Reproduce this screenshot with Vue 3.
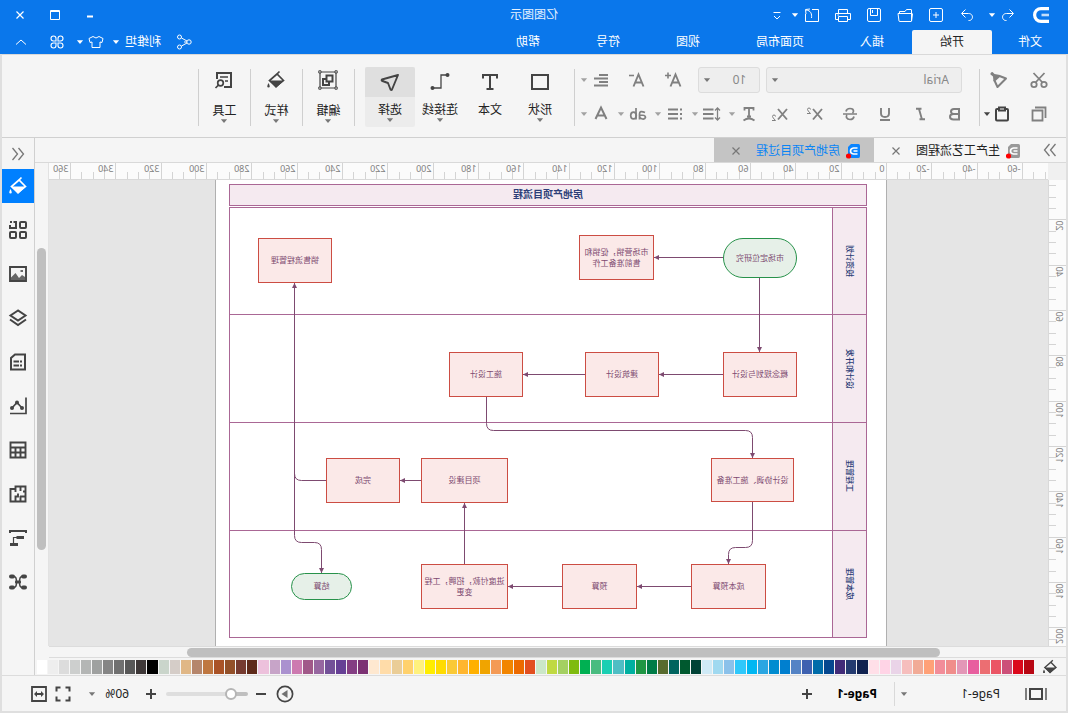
<script setup>
import { ref } from 'vue'

const font = ref('Arial')
const fontSize = ref('10')
const page = ref('Page-1')
const zoom = ref(16)

const menus = ['文件', '开始', '插入', '页面布局', '视图', '符号', '帮助']
const quick = [
  ['new', '新建'], ['open', '打开'], ['save', '保存'], ['print', '打印'], ['export', '导出'],
]
const formats = [
  ['bold', '加粗'], ['italic', '斜体'], ['underline', '下划线'],
  ['strike', '删除线'], ['sup', '上标'], ['sub', '下标'],
]
const textTools = [
  ['tcurve', '文字弯曲'], ['spacing', '行距'], ['bullets', '项目符号'], ['ab', '高亮'], ['acolor', '字体颜色'],
]
const tools = [
  { icon: 'shape', label: '形状', caret: true },
  { icon: 'text', label: '文本', caret: false },
  { icon: 'connector', label: '连接线', caret: true },
  { icon: 'pointer', label: '选择', caret: true, active: true },
]
const groups = [
  { icon: 'edit', label: '编辑' },
  { icon: 'bucket', label: '样式' },
  { icon: 'find', label: '工具' },
]
const side = [
  ['bucket', '填充'], ['grid', '符号库'], ['image', '图片'], ['layers', '图层'], ['doc', '注释'],
  ['chart', '图表'], ['table', '表格'], ['plan', '平面图'], ['gantt', '甘特图'], ['mind', '思维导图'],
]

const step = 45.33
const hTicks = []
for (let i = -14; i <= 74; i++) {
  const x = Math.round(161 + (i * step) / 4) + 0.5
  if (x > 0) hTicks.push({ x, major: i % 4 === 0, label: i * 5 })
}
const vTicks = []
for (let i = 1; i <= 41; i++) {
  const y = Math.round(-6 + (i * step) / 4) + 0.5
  if (y > 0) vTicks.push({ y, major: i % 4 === 0, label: i * 5 })
}

const lanes = [
  { y: 261, label: '投资计划' },
  { y: 369, label: '设计和开发' },
  { y: 476, label: '工程管理' },
  { y: 584, label: '成本管理' },
]
const laneLines = [314.5, 422.5, 530.5]
const nodes = [
  { x: 271.5, y: 238.5, w: 73, h: 39, end: true, lines: ['市场定位研究'] },
  { x: 414.5, y: 235.5, w: 74, h: 44, lines: ['市场营销，促销和', '售前准备工作'] },
  { x: 736.5, y: 238.5, w: 73, h: 44, lines: ['销售流程管理'] },
  { x: 271.5, y: 352.5, w: 73, h: 44, lines: ['概念规划与设计'] },
  { x: 409.5, y: 352.5, w: 73, h: 44, lines: ['建筑设计'] },
  { x: 545.5, y: 352.5, w: 73, h: 44, lines: ['施工设计'] },
  { x: 274.5, y: 458.5, w: 82, h: 43, lines: ['设计协调、施工准备'] },
  { x: 560.5, y: 458.5, w: 86, h: 44, lines: ['项目建设'] },
  { x: 668.5, y: 458.5, w: 73, h: 44, lines: ['完成'] },
  { x: 302.5, y: 564.5, w: 74, h: 44, lines: ['成本预算'] },
  { x: 431.5, y: 564.5, w: 74, h: 44, lines: ['预算'] },
  { x: 560.5, y: 564.5, w: 86, h: 44, lines: ['进度付款，招聘，工程', '变更'] },
  { x: 716.5, y: 573.5, w: 60, h: 26, end: true, lines: ['结算'] },
]
const links = [
  'M345 257.5H414', 'M308.5 278V352', 'M345 374.5H409', 'M483 374.5H545',
  'M581.5 397V423.5Q581.5 430.5 574.5 430.5H322.5Q315.5 430.5 315.5 437.5V458',
  'M315.5 502V540.5Q315.5 547.5 322.5 547.5H332.5Q339.5 547.5 339.5 554.5V564',
  'M377 586.5H431', 'M506 586.5H560', 'M603.5 564V503', 'M647 480.5H668',
  'M742 480.5H766.5Q773.5 480.5 773.5 473.5V283',
  'M773.5 473V535.5Q773.5 542.5 766.5 542.5H753.5Q746.5 542.5 746.5 549.5V573',
]

const colors = (
  'B80713 DB081B CC5079 EB5565 EC6E72 E85F9F E397B7 F08D8B F28D99 FFA178 F1AB97 F6BEBD EAD4E8 FFD4E6 FFDFE8 ' +
  '102250 243B70 412B78 05478F 006CA9 3E61B0 5483C5 007FCF 008CD0 2AA6E2 00B7F2 2FC8FB 8BC1EA A0D9F0 CFEAF6 ' +
  '004236 00592F 00645F 586B2E 007C47 1F9644 00B0A0 4FBEC4 1BCFB3 49BC80 00B052 7FBB0F A4D062 C0D942 CBE7C8 ' +
  'E24F20 EC6A00 F28500 F49A55 F0A400 FFB000 FFB62F FAC936 FFDB00 FFED00 FFF17D FFD16C EACD97 FFDCA9 FEE8D0 ' +
  '7C3173 843E83 664095 735198 9767A0 A15989 CD7AB0 AA91CF C7A4C8 EDC1DC 5E2A1A 763B30 935029 AA5327 BF7740 ' +
  'B5866C E0B786 D5CDC8 CAD5CB 000000 3E3838 585858 707070 858585 9FA1A0 B4B6B5 CDCFCE DCDCDC EEEEEE FFFFFF'
).split(' ').map((c) => '#' + c)
</script>

<template>
  <div class="app">
    <svg class="sheet" aria-hidden="true">
      <defs>
        <symbol id="logo" viewBox="0 0 20 20"><g fill="none" stroke="currentColor"><path stroke-width="3.200" d="M2 3.600H10A6.400 6.400 0 0 1 10 16.400H2" /><path stroke-width="2.600" opacity=".75" d="M2 10H9.500" /></g></symbol>
        <symbol id="undo" viewBox="0 0 20 20"><path fill="none" stroke="currentColor" d="M8.500 4.500L4.500 8.500L8.500 12.500M5 8.500H11.500C17 8.500 16.500 16 11.500 15.500" /></symbol>
        <symbol id="redo" viewBox="0 0 20 20"><path fill="none" stroke="currentColor" d="M11.500 4.500L15.500 8.500L11.500 12.500M15 8.500H8.500C3 8.500 3.500 16 8.500 15.500" /></symbol>
        <symbol id="new" viewBox="0 0 20 20"><path fill="none" stroke="currentColor" d="M5 3.500H15Q16.500 3.500 16.500 5V15Q16.500 16.500 15 16.500H5Q3.500 16.500 3.500 15V5Q3.500 3.500 5 3.500ZM7 10H13M10 7V13" /></symbol>
        <symbol id="open" viewBox="0 0 20 20"><path fill="none" stroke="currentColor" d="M3.500 16V5Q3.500 4.500 4 4.500H8.500L10 6.500H15.500V8.500M3.500 16.500L2.500 9Q2.500 8.500 3 8.500H17L16 16Q16 16.500 15 16.500H4" /></symbol>
        <symbol id="save" viewBox="0 0 20 20"><path fill="none" stroke="currentColor" d="M5 3.500H15Q16.500 3.500 16.500 5V15Q16.500 16.500 15 16.500H5Q3.500 16.500 3.500 15V5Q3.500 3.500 5 3.500ZM6.500 3.500V10.500H13.500V3.500M11.500 5V8" /></symbol>
        <symbol id="print" viewBox="0 0 20 20"><path fill="none" stroke="currentColor" d="M5.500 8V4.500H14.500V8M5 14.500H2.500V8.500H17.500V14.500H15M5.500 11.500H14.500V16.500H5.500ZM14 10H15.500" /></symbol>
        <symbol id="export" viewBox="0 0 20 20"><path fill="none" stroke="currentColor" d="M10 4.500H3.500V16.500H16.500V9M12 4L16.500 4.500L16 9M16 5C11 5.500 10 9 10.500 13" /></symbol>
        <symbol id="more" viewBox="0 0 20 20"><path fill="none" stroke="currentColor" d="M6.500 7.500H13.500M7 11L10 14L13 11" /></symbol>
        <symbol id="caret" viewBox="0 0 8 8"><path fill="currentColor" d="M1.500 2.500H6.500L4 5.500Z" /></symbol>
        <symbol id="min" viewBox="0 0 20 20"><path fill="currentColor" d="M7 10.500H13V12.500H7Z" /></symbol>
        <symbol id="max" viewBox="0 0 20 20"><path fill="none" stroke="currentColor" d="M5.500 5.500H14.500V14.500H5.500ZM5.500 6.500H14.500" /></symbol>
        <symbol id="close" viewBox="0 0 20 20"><path fill="none" stroke="currentColor" stroke-width="1.200" d="M6.500 6.500L13.500 13.500M13.500 6.500L6.500 13.500" /></symbol>
        <symbol id="up" viewBox="0 0 20 20"><path fill="none" stroke="currentColor" d="M5 12.500L10 8L15 12.500" /></symbol>
        <symbol id="share" viewBox="0 0 20 20"><g fill="none" stroke="currentColor"><circle cx="14.500" cy="5" r="2" /><circle cx="5" cy="10" r="2.200" /><circle cx="14.500" cy="15" r="2" /><path d="M7 9L12.500 6M7 11L12.500 14M7 10H10" /></g></symbol>
        <symbol id="shirt" viewBox="0 0 20 20"><path fill="none" stroke="currentColor" d="M7 4.500L3 6.500L4 10.500L6 10V15.500H14V10L16 10.500L17 6.500L13 4.500Q10 7.500 7 4.500Z" /></symbol>
        <symbol id="clover" viewBox="0 0 20 20"><path fill="none" stroke="currentColor" stroke-width="1.100" d="M9 9H6.500A2.500 2.500 0 1 1 9 6.500ZM11 9H13.500A2.500 2.500 0 1 0 11 6.500ZM9 11H6.500A2.500 2.500 0 1 0 9 13.500ZM11 11H13.500A2.500 2.500 0 1 1 11 13.500Z" /></symbol>
        <symbol id="cut" viewBox="0 0 20 20"><g fill="none" stroke="currentColor" stroke-width="1.800"><circle cx="5" cy="14.500" r="2.700" /><circle cx="15" cy="14.500" r="2.700" /><path d="M6.500 12.500L15.500 3M13.500 12.500L4.500 3" /></g></symbol>
        <symbol id="brush" viewBox="0 0 20 20"><path fill="none" stroke="currentColor" stroke-width="2" stroke-linejoin="round" d="M9.500 6L14.500 10.500L11.500 17L3 8.500Z" /><path fill="currentColor" d="M9 5L15.500 11.500L16 6.500L18.500 4.500Q19 2.500 16.500 2L14.500 4Z" /></symbol>
        <symbol id="copy" viewBox="0 0 20 20"><path fill="none" stroke="currentColor" stroke-width="1.800" d="M6.500 6.500H16.500V16.500H6.500ZM3.500 14V3.500H14" /></symbol>
        <symbol id="paste" viewBox="0 0 20 20"><path fill="none" stroke="currentColor" stroke-width="2" d="M6.500 5H5Q4 5 4 6V15.500Q4 16.500 5 16.500H15Q16 16.500 16 15.500V6Q16 5 15 5H13.500M7 3.500H13V6.500H7Z" /></symbol>
        <symbol id="aplus" viewBox="0 0 20 20"><path fill="none" stroke="currentColor" stroke-width="1.900" d="M3.500 16.500L8.500 4.500L13.500 16.500M5.500 12.500H11.500" /><path fill="none" stroke="currentColor" stroke-width="1.600" d="M13 5.500H19M16 2.500V8.500" /></symbol>
        <symbol id="aminus" viewBox="0 0 20 20"><path fill="none" stroke="currentColor" stroke-width="1.900" d="M3.500 16.500L8.500 4.500L13.500 16.500M5.500 12.500H11.500" /><path fill="none" stroke="currentColor" stroke-width="1.600" d="M13 5.500H18" /></symbol>
        <symbol id="align" viewBox="0 0 20 20"><path fill="none" stroke="currentColor" stroke-width="2" d="M3 5H12M3 8.500H17M3 12H12M3 15.500H17" /></symbol>
        <symbol id="bold" viewBox="0 0 20 20"><path fill="none" stroke="currentColor" stroke-width="2" d="M6 5H11Q14 5 14 7.500Q14 10 11 10H6V15.500H11.500Q15 15.500 15 12.700Q15 10 11.500 10M6 4V16" /></symbol>
        <symbol id="italic" viewBox="0 0 20 20"><path fill="none" stroke="currentColor" stroke-width="1.900" d="M6 4.800H11.500M9 5L12 15.500M9.500 15.200H15" transform="matrix(-1 0 0 1 20 0)" /></symbol>
        <symbol id="underline" viewBox="0 0 20 20"><path fill="none" stroke="currentColor" stroke-width="1.900" d="M6 4V9.500Q6 13 10 13Q14 13 14 9.500V4M5 16H15" /></symbol>
        <symbol id="strike" viewBox="0 0 20 20"><path fill="none" stroke="currentColor" stroke-width="1.700" d="M14 7.500Q13.500 4.500 10 4.500Q6.500 4.500 6.500 7Q6.500 8 7.500 9M13 11Q14 12 13.500 13.500Q12.500 15.500 10 15.500Q6.500 15.500 6 12.500M3 10H17" /></symbol>
        <symbol id="x" viewBox="0 0 20 20"><path fill="none" stroke="currentColor" stroke-width="1.900" d="M3 5L12 15.500M12 5L3 15.500" /></symbol>
        <symbol id="two" viewBox="0 0 6 8"><path fill="none" stroke="currentColor" stroke-width="1" d="M1.500 2.500Q1.500 1 3 1Q4.500 1 4.500 2.500Q4.500 3.500 1.500 6.500H5" /></symbol>
        <symbol id="sup" viewBox="0 0 20 20"><use href="#x" width="20" height="20" /><use href="#two" x="13" y="3" width="6" height="8" /></symbol>
        <symbol id="sub" viewBox="0 0 20 20"><use href="#x" width="20" height="20" /><use href="#two" x="13" y="10" width="6" height="8" /></symbol>
        <symbol id="tcurve" viewBox="0 0 20 20"><path fill="none" stroke="currentColor" stroke-width="1.800" d="M5.500 6.500V4H14.500V6.500M10 4V12.500M8 12.500H12M4.500 16.500Q10 12.500 15.500 16.500" /></symbol>
        <symbol id="spacing" viewBox="0 0 20 20"><path fill="none" stroke="currentColor" stroke-width="1.300" d="M4.500 4V16M2 6.500L4.500 4L7 6.500M2 13.500L4.500 16L7 13.500" /><path fill="none" stroke="currentColor" stroke-width="1.900" d="M8.500 5.500H19M8.500 10H19M8.500 14.500H19" /></symbol>
        <symbol id="bullets" viewBox="0 0 20 20"><path fill="none" stroke="currentColor" stroke-width="1.900" d="M3 5.500H5M3 10H5M3 14.500H5M7 5.500H17M7 10H17M7 14.500H17" /></symbol>
        <symbol id="ab" viewBox="0 0 20 20"><g fill="none" stroke="currentColor" stroke-width="1.700"><path d="M3 8.500Q8.500 6 8.500 10V15.500M8.500 11Q2.500 11 2.500 13.300Q3 15.500 5.500 15Q8.500 14.500 8.500 12" /><path d="M12 4V15.500" /><ellipse cx="14.500" cy="11.500" rx="2.800" ry="3.400" /></g></symbol>
        <symbol id="acolor" viewBox="0 0 20 20"><path fill="none" stroke="currentColor" stroke-width="2" d="M4.500 15L10 3.500L15.500 15M6.500 11.500H13.500" /></symbol>
        <symbol id="shape" viewBox="0 0 20 20"><path fill="none" stroke="currentColor" stroke-width="2" d="M2 3H18V17H2Z" /></symbol>
        <symbol id="text" viewBox="0 0 20 20"><path fill="none" stroke="currentColor" stroke-width="2" d="M3 6.500V3H17V6.500M10 3V17M6.500 17H13.500" /></symbol>
        <symbol id="connector" viewBox="0 0 20 20"><path fill="none" stroke="currentColor" stroke-width="1.300" d="M4 3H9V16H16" /><circle cx="2.500" cy="3" r="2" fill="currentColor" /><circle cx="17.500" cy="16" r="2" fill="currentColor" /></symbol>
        <symbol id="pointer" viewBox="0 0 20 20"><path fill="none" stroke="currentColor" stroke-width="1.900" stroke-linejoin="round" d="M2 3L18 7.500Q19 8.500 17.500 9L12 11L9.500 17.500Q8.500 18.500 8 17.500Z" /></symbol>
        <symbol id="edit" viewBox="0 0 20 20"><path fill="none" stroke="currentColor" stroke-width="1.200" d="M2 2H18V18H2Z" /><path fill="none" stroke="currentColor" stroke-width="2" d="M5.500 5.500H11.500V11.500H5.500ZM12.500 9H15V15H9V12.500" /><path fill="#f5f5f5" stroke="currentColor" d="M.8.800H3V3H.8ZM17 .8H19.200V3H17ZM.8 17H3V19.200H.8ZM17 17H19.200V19.200H17Z" /></symbol>
        <symbol id="bucket" viewBox="0 0 20 20"><path fill="none" stroke="currentColor" stroke-width="1.700" d="M2.500 10.500L9 4L16.500 10.500L10 16.500ZM6.500 1.500L11 6" /><path fill="currentColor" d="M2 10.500H17L10 18ZM17.500 13Q20 17.500 17.500 17.500Q15 17.500 17.500 13Z" /></symbol>
        <symbol id="find" viewBox="0 0 20 20"><path fill="none" stroke="currentColor" stroke-width="2" d="M10 17H3V3H17V9" /><path fill="none" stroke="currentColor" stroke-width="1.500" d="M6 7H14M6 11H9" /><g fill="none" stroke="currentColor" stroke-width="1.700"><circle cx="13.500" cy="13" r="2.800" /><path d="M15.500 15L18.500 18" /></g></symbol>
        <symbol id="left2" viewBox="0 0 20 20"><path fill="none" stroke="currentColor" stroke-width="1.300" d="M9.500 4L4.500 10L9.500 16M15.500 4L10.500 10L15.500 16" /></symbol>
        <symbol id="right2" viewBox="0 0 20 20"><path fill="none" stroke="currentColor" stroke-width="1.300" d="M4.500 4L9.500 10L4.500 16M10.500 4L15.500 10L10.500 16" /></symbol>
        <symbol id="file" viewBox="0 0 16 16"><path fill="currentColor" d="M2 2.500Q2 1 3.500 1H11L14 4V13Q14 15 12.500 15H3.500Q2 15 2 13Z" /><path fill="none" stroke="#fff" stroke-width="1.600" d="M4.500 5H8.500Q11.500 5.500 11.500 8Q11.500 10.500 8.500 11H4.500M4.500 8H8.500" /><circle cx="13.500" cy="13" r="2.600" fill="#f00" /></symbol>
        <symbol id="grid" viewBox="0 0 20 20"><g fill="none" stroke="currentColor" stroke-width="2"><rect x="2" y="2" width="6" height="6" rx="1" /><rect x="2" y="12" width="6" height="6" rx="1" /><rect x="12" y="12" width="6" height="6" rx="1" /><path d="M14.500 2H12V8H18V5M16 2H18" /></g></symbol>
        <symbol id="image" viewBox="0 0 20 20"><path fill="none" stroke="currentColor" stroke-width="1.900" d="M2 3H18V17H2Z" /><path fill="currentColor" opacity=".8" d="M3 16.500V13L6 11L9 14L12.500 9L17 13.500V16.500ZM5 6H7.500V8H5Z" /></symbol>
        <symbol id="layers" viewBox="0 0 20 20"><path fill="none" stroke="currentColor" stroke-width="2" d="M10 2.500L17.500 7.500L10 12.500L2.500 7.500ZM2 11.500L10 17L18 11.500" /></symbol>
        <symbol id="doc" viewBox="0 0 20 20"><path fill="none" stroke="currentColor" stroke-width="2" d="M3 2.500H13L17 6V17.500H3ZM6 9.500H8M9 9.500H14.500M6 13.500H8M9 13.500H14.500" /></symbol>
        <symbol id="chart" viewBox="0 0 20 20"><path fill="none" stroke="currentColor" stroke-width="1.700" d="M2 1.500V17.500H18M6 12L11 6.500L16 12" /><g fill="currentColor"><circle cx="6" cy="12" r="2" /><circle cx="11" cy="6.500" r="2" /><circle cx="16" cy="12" r="2" /></g></symbol>
        <symbol id="table" viewBox="0 0 20 20"><path fill="none" stroke="currentColor" stroke-width="1.900" d="M2.500 2.500H17.500V17.500H2.500ZM2.500 7.500H17.500M2.500 12.500H17.500M7.500 8V17M12.500 8V17" /></symbol>
        <symbol id="plan" viewBox="0 0 20 20"><path fill="none" stroke="currentColor" stroke-width="1.900" d="M2.500 2.500H12.500V5H17.500V17.500H2.500ZM2.500 7.500H5M7.500 2.500V7M12.500 5V8M2.500 12.500H8M7.500 12V17M10 9.500V12.500H12.500V17" /></symbol>
        <symbol id="gantt" viewBox="0 0 20 20"><path fill="none" stroke="currentColor" stroke-width="2" d="M2 5V3H18V5" /><path fill="currentColor" d="M4 8H11.500V11H4ZM10 15H18V18H10Z" /><path fill="none" stroke="currentColor" stroke-width="1.200" d="M11 9.500H14.500V16" /></symbol>
        <symbol id="mind" viewBox="0 0 20 20"><g fill="currentColor"><rect x="1" y="2.500" width="6" height="4" rx="2" /><rect x="13" y="2.500" width="6" height="4" rx="2" /><rect x="1" y="13.500" width="6" height="4" rx="2" /><rect x="13" y="13.500" width="6" height="4" rx="2" /><rect x="7" y="8.500" width="6" height="3" rx="1" /></g><path fill="none" stroke="currentColor" stroke-width="1.500" d="M6 4.500Q8.500 4.500 8.500 10Q8.500 15.500 6 15.500M14 4.500Q11.500 4.500 11.500 10Q11.500 15.500 14 15.500" /></symbol>
        <symbol id="pages" viewBox="0 0 24 20"><path fill="none" stroke="currentColor" stroke-width="2" d="M6 5H18V15H6Z" /><path fill="none" stroke="currentColor" stroke-width="1.800" opacity=".75" d="M2 4V16M22 4V16" /></symbol>
        <symbol id="plus" viewBox="0 0 20 20"><path fill="none" stroke="currentColor" stroke-width="2" d="M5 10H15M10 5V15" /></symbol>
        <symbol id="minus" viewBox="0 0 20 20"><path fill="none" stroke="currentColor" stroke-width="2" d="M5 10H15" /></symbol>
        <symbol id="play" viewBox="0 0 20 20"><circle cx="10" cy="10" r="7.600" fill="none" stroke="currentColor" stroke-width="1.700" /><path fill="currentColor" opacity=".75" d="M7.500 6V14L13.500 10Z" /></symbol>
        <symbol id="full" viewBox="0 0 20 20"><path fill="none" stroke="currentColor" stroke-width="2" d="M3.500 7.500V3.500H7.500M12.500 3.500H16.500V7.500M16.500 12.500V16.500H12.500M7.500 16.500H3.500V12.500" /></symbol>
        <symbol id="fit" viewBox="0 0 20 20"><path fill="none" stroke="currentColor" stroke-width="1.800" d="M3 3H17V17H3ZM6 10H14" /><path fill="currentColor" d="M5 10L8 7V13ZM15 10L12 7V13Z" /></symbol>
        <marker id="tip" viewBox="0 0 5 5" refX="5" refY="2.500" markerWidth="5" markerHeight="5" orient="auto" markerUnits="userSpaceOnUse"><path fill="#7d4a70" d="M0 0L5 2.500L0 5Z" /></marker>
      </defs>
    </svg>

    <header class="head">
      <div class="titlebar">
        <div class="quick">
          <svg class="logo"><use href="#logo" /></svg>
          <button class="q20" aria-label="撤销"><svg class="ic"><use href="#undo" /></svg></button>
          <button class="q12" aria-label="撤销列表"><svg class="car"><use href="#caret" /></svg></button>
          <button class="q31 redo" aria-label="恢复"><svg class="ic"><use href="#redo" /></svg></button>
          <button v-for="q in quick" :key="q[0]" class="q31" :aria-label="q[1]"><svg class="ic"><use :href="'#' + q[0]" /></svg></button>
          <button class="q0" aria-label="导出列表"><svg class="car"><use href="#caret" /></svg></button>
          <button class="q31" aria-label="自定义"><svg class="ic"><use href="#more" /></svg></button>
        </div>
        <span class="title">亿图图示</span>
        <div class="win">
          <button aria-label="最小化"><svg class="ic"><use href="#min" /></svg></button>
          <button aria-label="最大化"><svg class="ic"><use href="#max" /></svg></button>
          <button aria-label="关闭"><svg class="ic"><use href="#close" /></svg></button>
        </div>
      </div>
      <nav class="menubar">
        <button v-for="m in menus" :key="m" class="menu" :class="{ first: m === '文件', on: m === '开始' }">{{ m }}</button>
        <div class="account">
          <button aria-label="分享"><svg class="ic"><use href="#share" /></svg></button>
          <button class="user">利维坦<svg class="car"><use href="#caret" /></svg></button>
          <button class="skin" aria-label="皮肤"><svg class="ic"><use href="#shirt" /></svg><svg class="car"><use href="#caret" /></svg></button>
          <button class="wide" aria-label="应用"><svg class="ic"><use href="#clover" /></svg></button>
          <button class="wide" aria-label="收起"><svg class="ic"><use href="#up" /></svg></button>
        </div>
      </nav>
    </header>

    <div class="frame">
      <section class="ribbon">
        <div class="rows clip">
          <div class="row">
            <button class="b40" aria-label="剪切"><svg class="ic"><use href="#cut" /></svg></button>
            <button class="b40" aria-label="格式刷"><svg class="ic"><use href="#brush" /></svg></button>
          </div>
          <div class="row">
            <button class="b40" aria-label="复制"><svg class="ic"><use href="#copy" /></svg></button>
            <button class="paste" aria-label="粘贴"><svg class="ic"><use href="#paste" /></svg><svg class="car"><use href="#caret" /></svg></button>
          </div>
        </div>
        <i class="rule"></i>
        <div class="rows fonts">
          <div class="row pick">
            <label class="sel family">
              <select v-model="font" aria-label="字体"><option>Arial</option></select>
              <svg class="car"><use href="#caret" /></svg>
            </label>
            <label class="sel size">
              <select v-model="fontSize" aria-label="字号"><option>10</option></select>
              <svg class="car"><use href="#caret" /></svg>
            </label>
            <div class="sizes">
              <button class="b36" aria-label="增大字号"><svg class="ic"><use href="#aplus" /></svg></button>
              <button class="b36" aria-label="减小字号"><svg class="ic"><use href="#aminus" /></svg></button>
            </div>
            <button class="drop" aria-label="对齐"><svg class="ic"><use href="#align" /></svg><svg class="car"><use href="#caret" /></svg></button>
          </div>
          <div class="row">
            <button v-for="f in formats" :key="f[0]" class="b35" :aria-label="f[1]"><svg class="ic"><use :href="'#' + f[0]" /></svg></button>
            <div class="drops">
              <button v-for="t in textTools" :key="t[0]" class="drop" :aria-label="t[1]"><svg class="ic"><use :href="'#' + t[0]" /></svg><svg class="car"><use href="#caret" /></svg></button>
            </div>
          </div>
        </div>
        <i class="rule"></i>
        <div class="bigs">
          <button v-for="t in tools" :key="t.icon" class="big" :class="{ on: t.active }">
            <span class="pic"><svg class="ic"><use :href="'#' + t.icon" /></svg></span>
            <span class="lab">{{ t.label }}</span>
            <svg v-if="t.caret" class="car"><use href="#caret" /></svg>
          </button>
        </div>
        <template v-for="g in groups" :key="g.icon">
          <i class="rule"></i>
          <button class="big group">
            <span class="pic"><svg class="ic"><use :href="'#' + g.icon" /></svg></span>
            <span class="lab">{{ g.label }}</span>
            <svg class="car"><use href="#caret" /></svg>
          </button>
        </template>
        <i class="rule"></i>
      </section>

      <div class="body">
        <main class="work">
          <div class="tabs">
            <button class="fold" aria-label="展开左侧"><svg class="ic"><use href="#right2" /></svg></button>
            <div class="tab">
              <svg class="fi"><use href="#file" /></svg><span>生产工艺流程图</span>
              <button aria-label="关闭标签"><svg class="ic"><use href="#close" /></svg></button>
            </div>
            <div class="tab on">
              <svg class="fi"><use href="#file" /></svg><span>房地产项目过程</span>
              <button aria-label="关闭标签"><svg class="ic"><use href="#close" /></svg></button>
            </div>
          </div>

          <div class="stage">
            <div class="corner"></div>
            <svg class="hruler">
              <g v-for="t in hTicks" :key="t.x">
                <line :x1="t.x" :x2="t.x" :y1="t.major ? 0 : 9" y2="17" />
                <text v-if="t.major" :x="t.x + 2" y="9">{{ t.label }}</text>
              </g>
            </svg>
            <div class="vbar"><div class="vthumb"></div></div>
            <svg class="vruler">
              <g v-for="t in vTicks" :key="t.y">
                <line :y1="t.y" :y2="t.y" :x1="t.major ? 0 : 10" x2="18" />
                <text v-if="t.major" :transform="`translate(10 ${t.y + 1}) rotate(-90)`" text-anchor="end">{{ t.label }}</text>
              </g>
            </svg>
            <div class="canvas">
              <div class="sheetpage">
                <svg class="diagram" viewBox="182 180 670 466">
                  <rect class="lane" x="201.500" y="184.500" width="637" height="21" />
                  <rect class="lane" x="201.500" y="207.500" width="34" height="430" />
                  <rect class="pool" x="201.500" y="207.500" width="637" height="430" />
                  <path class="pool" d="M235.500 207.500V637.500" />
                  <path v-for="y in laneLines" :key="y" class="pool" :d="`M201.500 ${y}H838.500`" />
                  <text class="dtitle" x="520" y="198">房地产项目流程</text>
                  <text v-for="l in lanes" :key="l.label" class="dlane" :transform="`translate(221 ${l.y}) rotate(-90)`">{{ l.label }}</text>
                  <path v-for="d in links" :key="d" class="link" :d="d" marker-end="url(#tip)" />
                  <g v-for="n in nodes" :key="n.lines[0]" :class="n.end ? 'term' : 'proc'">
                    <rect :x="n.x" :y="n.y" :width="n.w" :height="n.h" :rx="n.end ? n.h / 2 : 0" />
                    <text v-for="(s, i) in n.lines" :key="s" :x="n.x + n.w / 2" :y="n.y + n.h / 2 + 2.5 + i * 11 - (n.lines.length - 1) * 5">{{ s }}</text>
                  </g>
                </svg>
              </div>
            </div>
          </div>
          <div class="hbar"><div class="hthumb"></div></div>
          <div class="palette">
            <button class="pb" aria-label="填充颜色"><svg class="ic"><use href="#bucket" /></svg></button>
            <div class="swatches">
              <button v-for="c in colors" :key="c" :style="{ background: c }" :aria-label="c"></button>
            </div>
          </div>
        </main>
        <aside class="side">
          <button class="fold" aria-label="收起右侧"><svg class="ic"><use href="#left2" /></svg></button>
          <button v-for="(s, i) in side" :key="s[0]" class="sb" :class="{ on: i === 0 }" :aria-label="s[1]"><svg class="ic"><use :href="'#' + s[0]" /></svg></button>
        </aside>
      </div>

      <footer class="status">
        <button class="pg" aria-label="页面预览"><svg class="wideic"><use href="#pages" /></svg></button>
        <label class="pagesel">
          <select v-model="page" aria-label="页面"><option>Page-1</option></select>
          <svg class="car"><use href="#caret" /></svg>
        </label>
        <button class="pname">Page-1</button>
        <button class="add" aria-label="添加页面"><svg class="ic"><use href="#plus" /></svg></button>
        <div class="zoombar">
          <button class="s28" aria-label="播放"><svg class="ic"><use href="#play" /></svg></button>
          <button class="s20" aria-label="缩小"><svg class="ic"><use href="#minus" /></svg></button>
          <input v-model="zoom" type="range" min="0" max="100" aria-label="缩放" />
          <button class="s24" aria-label="放大"><svg class="ic"><use href="#plus" /></svg></button>
          <button class="pct">60%<svg class="car"><use href="#caret" /></svg></button>
          <button class="s24" aria-label="全屏"><svg class="ic"><use href="#full" /></svg></button>
          <button class="s24" aria-label="适合宽度"><svg class="ic"><use href="#fit" /></svg></button>
        </div>
      </footer>
    </div>
  </div>
</template>

<style>
body { margin: 0; }
</style>

<style scoped>
/* The whole window is shown flipped from left to right. */
.app { transform: scaleX(-1); min-height: 100vh; display: flex; flex-direction: column; background: #f5f5f5; color: #444; font: 12px/16px "Noto Sans", "Noto Sans CJK SC", sans-serif; overflow: hidden; }
.app *, .app { box-sizing: border-box; }
button, select { font: inherit; color: inherit; background: none; border: 0; padding: 0; margin: 0; }
button { display: flex; align-items: center; justify-content: center; flex: none; white-space: nowrap; }
.sheet { position: absolute; width: 0; height: 0; }
.ic { width: 20px; height: 20px; flex: none; }
.car { width: 10px; height: 10px; flex: none; }

.head { background: #0a77eb; color: #fff; }
.titlebar { display: grid; grid-template-columns: 1fr auto 1fr; height: 30px; align-items: center; }
.quick { display: flex; align-items: center; padding-left: 17px; }
.quick button, .win button { height: 28px; }
.logo { width: 20px; height: 20px; margin-right: 13px; }
.q20 { width: 20px; }
.q12 { width: 12px; }
.redo { margin-left: 3px; }
.q31 { width: 31px; }
.quick .q0 { width: 4px; }
.title { color: #e8f2ff; }
.win { display: flex; justify-content: flex-end; padding-right: 3px; }
.win button { width: 35px; }
.menubar { display: flex; height: 24px; }
.menu { padding: 0 28px; color: #fff; }
.menu.first { padding: 0 26px; }
.menu.on { background: #f5f5f5; color: #222; border-radius: 2px 2px 0 0; }
.account { margin-left: auto; display: flex; align-items: center; padding-right: 3px; }
.user { margin-left: 13px; gap: 4px; }
.skin { padding-left: 5px; gap: 1px; }
.wide { width: 36px; }

.frame { flex: 1; display: flex; flex-direction: column; border: solid #dfdfdf; border-width: 0 2px 2px; min-height: 0; }
.ribbon { display: flex; align-items: center; height: 84px; padding-top: 2px; border-top: 1px solid #d9d9d9; border-bottom: 1px solid #d0d0d0; color: #808080; }
.rule { width: 1px; height: 57px; background: #cfcfcf; flex: none; }
.rows { display: flex; flex-direction: column; gap: 8px; }
.row { display: flex; align-items: center; height: 26px; }
.clip { padding-left: 7px; width: 86px; }
.b40 { width: 40px; }
.b36 { width: 37px; }
.b35 { width: 35px; }
.paste { padding-left: 7px; color: #444; }
.fonts { padding: 0 4px 0 6px; }
.pick { padding-left: 11px; justify-content: space-between; }
.sel { position: relative; height: 26px; background: #eee; border: 1px solid #dcdcdc; border-radius: 3px; color: #888; }
.sel select, .pagesel select { appearance: none; width: 100%; height: 100%; outline: 0; }
.family { width: 196px; }
.family select { padding-left: 12px; }
.size { width: 62px; }
.size select { padding-left: 13px; }
.sel .car { position: absolute; right: 3px; top: 7px; color: #777; pointer-events: none; }
.sizes { display: flex; }
.drops { display: flex; gap: 3px; margin-left: 2px; }
.drop { width: 34px; }
.drop .ic { margin: 0 2px; }
.drop .car { opacity: .7; }
.bigs { display: flex; padding: 0 10px 0 9px; }
.big { flex-direction: column; justify-content: flex-start; width: 50px; height: 60px; color: #444; border-radius: 2px; overflow: hidden; }
.big.on { background: #ececec; }
.big .pic { display: flex; align-items: center; justify-content: center; width: 100%; height: 30px; }
.big.on .pic { background: #dfdfdf; }
.big .lab { color: #222; padding-top: 5px; line-height: 16px; }
.big .car { color: #777; margin-top: -3px; }
.group { width: 51px; }
.group .pic { height: 26px; }
.group .lab { padding-top: 10px; }

.body { flex: 1; display: flex; min-height: 0; }
.work { flex: 1; min-width: 0; display: flex; flex-direction: column; }
.tabs { display: flex; height: 25px; border-bottom: 1px solid #d9d9d9; }
.tabs .fold { width: 32px; color: #777; }
.tab { display: flex; align-items: center; width: 160px; padding-left: 12px; padding-top: 2px; color: #222; }
.tab .fi { width: 16px; height: 16px; color: #999; margin-right: 6px; flex: none; }
.tab button { width: 20px; margin-left: 10px; color: #777; }
.tab.on { background: #c4c4c4; color: #0a84f5; }
.tab.on .fi { color: #0a84ff; }
.stage { flex: 1; display: grid; grid-template: 17px 1fr / 18px 1fr 14px; min-height: 0; }
.corner { background: #f0f0f0; }
.hruler { width: 100%; height: 17px; background: #fbfbfb; border-bottom: 1px solid #d9d9d9; }
.vruler { width: 18px; height: 100%; background: #fbfbfb; border-right: 1px solid #d9d9d9; }
.hruler line, .vruler line { stroke: #d4d4d4; }
.hruler text, .vruler text { font-size: 9px; fill: #808080; }
.vbar { grid-row: 1 / 3; grid-column: 3; background: #f5f5f5; padding: 85px 2px 0; border-left: 1px solid #e2e2e2; }
.vthumb { height: 76%; background: #bfbfbf; border-radius: 5px; }
.canvas { background: #e5e5e5; overflow: hidden; display: flex; padding-left: 161px; }
.sheetpage { background: #fff; border: solid #b0b0b0; border-width: 0 1px; width: 672px; flex: none; }
.diagram { display: block; width: 670px; height: 466px; }
.lane { fill: #f5eaf0; stroke: #aa6795; }
.pool { fill: none; stroke: #aa6795; }
.link { fill: none; stroke: #7d4a70; }
.dtitle { font-size: 10px; font-weight: 700; fill: #2d3f78; text-anchor: middle; }
.dlane { font-size: 8px; font-weight: 500; fill: #2d3f78; text-anchor: middle; }
.proc rect { fill: #fbe9e8; stroke: #cc4d43; }
.term rect { fill: #e6f0e8; stroke: #27924a; }
.proc text, .term text { font-size: 8px; fill: #7d4a70; text-anchor: middle; }
.hbar { height: 12px; margin-right: 14px; border: solid #dcdcdc; border-width: 1px 0; padding: 1px 0 0; }
.hthumb { height: 9px; width: 74%; margin: 0 auto 0 126px; background: #bfbfbf; border-radius: 5px; }
.palette { display: flex; align-items: center; height: 17px; }
.pb { width: 32px; height: 17px; }
.pb .ic { width: 16px; height: 16px; }
.swatches { flex: 1; display: flex; gap: 1px; height: 14px; padding-right: 1px; }
.swatches button { flex: 1; min-width: 0; }
.side { width: 33px; border-left: 1px solid #d0d0d0; display: flex; flex-direction: column; flex: none; }
.side .fold { height: 31px; color: #777; }
.sb { height: 44px; }
.sb.on { height: 34px; margin-bottom: 5px; background: #0080ff; color: #fff; }

.status { display: flex; align-items: center; height: 36px; border-top: 1px solid #dcdcdc; color: #444; }
.pg { margin-left: 18px; }
.wideic { width: 24px; height: 20px; }
.pagesel { position: relative; width: 128px; height: 24px; margin-left: 2px; border-right: 1px solid #d9d9d9; color: #222; }
.pagesel select { padding-left: 22px; }
.pagesel .car { position: absolute; right: 4px; top: 7px; color: #777; }
.pname { font-weight: 700; color: #000; margin-left: 17px; }
.add { margin-left: 20px; }
.zoombar { margin-left: auto; display: flex; align-items: center; padding-right: 25px; }
.s28 { width: 28px; }
.s20 { width: 20px; }
.s24 { width: 24px; }
.pct { width: 64px; padding-left: 10px; gap: 8px; justify-content: flex-start; color: #222; }
.pct .car { color: #777; }
.zoombar input { appearance: none; width: 82px; height: 4px; margin: 0 3px; border-radius: 2px; background: linear-gradient(90deg, #bfbfbf 18%, #dedede 18%); }
.zoombar input::-webkit-slider-thumb { appearance: none; width: 12px; height: 12px; border-radius: 50%; background: #fff; border: 2px solid #b5b5b5; }
</style>
